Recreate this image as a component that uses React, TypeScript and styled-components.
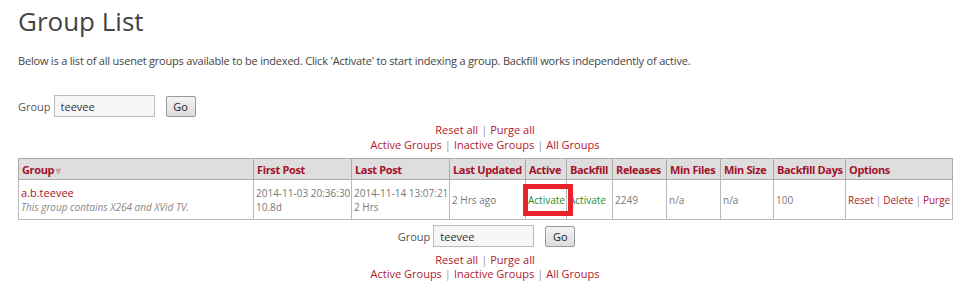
import React from "react";
import styled, { createGlobalStyle } from "styled-components";

const GlobalStyle = createGlobalStyle`
  body {
    margin: 0;
    background: #fff;
    font-family: "Open Sans", "DejaVu Sans", sans-serif;
    font-size: 11px;
    color: #555;
  }
`;

const Page = styled.div`
  padding: 0 18px;
  width: 934px;
`;

const Title = styled.h1`
  margin: 0;
  padding-top: 4px;
  font-size: 26px;
  line-height: 34px;
  font-weight: 400;
  color: #444;
`;

const Intro = styled.p`
  margin: 15px 0 0;
  line-height: 16px;
  letter-spacing: -0.2px;
  color: #444;
`;

const SearchForm = styled.form<{ $center?: boolean }>`
  display: flex;
  align-items: center;
  justify-content: ${(p) => (p.$center ? "center" : "flex-start")};
  margin: ${(p) => (p.$center ? "5px 0 0" : "26px 0 0")};
  ${(p) => (p.$center ? "padding-left: 3px;" : "")}
`;

const Label = styled.label`
  color: #555;
  margin-right: 3px;
`;

const TextInput = styled.input`
  box-sizing: border-box;
  width: 101px;
  height: 22px;
  border: 1px solid #bbb;
  background: #f6f6f6;
  padding: 0 6px;
  font-family: inherit;
  font-size: 11px;
  color: #333;
`;

const GoButton = styled.button`
  box-sizing: border-box;
  width: 30px;
  height: 21px;
  margin-left: 11px;
  border: 1px solid #999;
  border-radius: 2px;
  background: linear-gradient(#f4f4f4, #dcdcdc);
  font-family: inherit;
  font-size: 11px;
  color: #222;
  padding: 0;
`;

const LinkBlock = styled.div<{ $tight?: boolean }>`
  text-align: center;
  line-height: ${(p) => (p.$tight ? "14px" : "15px")};
  margin-top: ${(p) => (p.$tight ? "6px" : "5px")};
`;

const Link = styled.a<{ $tone?: "red" | "green" }>`
  color: ${(p) => (p.$tone === "green" ? "#2a8a2a" : "#b0202e")};
  text-decoration: none;
  cursor: pointer;
`;

const Sep = styled.span<{ $narrow?: boolean }>`
  color: #99a;
  margin: ${(p) => (p.$narrow ? "0 2px" : "0 3px")};
`;

const Table = styled.table`
  width: 934px;
  margin-top: 6px;
  table-layout: fixed;
  border-collapse: collapse;
  border: 1px solid #aaa;
`;

const Col = styled.col<{ $w: number }>`
  width: ${(p) => p.$w}px;
`;

const Th = styled.th`
  background: #dedede;
  border: 1px solid #aaa;
  color: #a3122a;
  font-weight: 700;
  letter-spacing: -0.35px;
  text-align: left;
  padding: 0 3px;
  height: 20px;
  white-space: nowrap;
  overflow: hidden;
`;

const SortArrow = styled.span`
  color: #c9a0a4;
  font-size: 8px;
  margin-left: 1px;
`;

const Td = styled.td`
  border: 1px solid #bbb;
  color: #777;
  font-size: 10px;
  padding: 0 1px 0 2px;
  height: 39px;
  vertical-align: middle;
  white-space: nowrap;
  line-height: 14px;
`;

const ActiveTd = styled(Td)`
  position: relative;
`;

const GroupName = styled.a`
  display: block;
  color: #a3122a;
  font-size: 11px;
  text-decoration: none;
`;

const GroupDesc = styled.div`
  color: #888;
  font-style: italic;
  font-size: 10px;
`;

const Highlight = styled.span`
  position: absolute;
  left: -3px;
  top: 4px;
  width: 50px;
  height: 32px;
  box-sizing: border-box;
  border: 5px solid #e8212b;
  pointer-events: none;
`;

const headers = [
  { label: "Group", w: 235, sort: true },
  { label: "First Post", w: 98 },
  { label: "Last Post", w: 98 },
  { label: "Last Updated", w: 76 },
  { label: "Active", w: 41 },
  { label: "Backfill", w: 46 },
  { label: "Releases", w: 54 },
  { label: "Min Files", w: 54 },
  { label: "Min Size", w: 53 },
  { label: "Backfill Days", w: 72 },
  { label: "Options", w: 107 },
];

const NavLinks = ({ tight }: { tight?: boolean }) => (
  <LinkBlock $tight={tight}>
    <div>
      <Link>Reset all</Link>
      <Sep>|</Sep>
      <Link>Purge all</Link>
    </div>
    <div>
      <Link>Active Groups</Link>
      <Sep>|</Sep>
      <Link>Inactive Groups</Link>
      <Sep>|</Sep>
      <Link>All Groups</Link>
    </div>
  </LinkBlock>
);

const Search = ({ center }: { center?: boolean }) => (
  <SearchForm $center={center} onSubmit={(e) => e.preventDefault()}>
    <Label>Group</Label>
    <TextInput defaultValue="teevee" />
    <GoButton type="submit">Go</GoButton>
  </SearchForm>
);

export default function App() {
  return (
    <>
      <GlobalStyle />
      <Page>
        <Title>Group List</Title>
        <Intro>
          Below is a list of all usenet groups available to be indexed. Click 'Activate' to start
          indexing a group. Backfill works independently of active.
        </Intro>
        <Search />
        <NavLinks />
        <Table>
          <colgroup>
            {headers.map((h) => (
              <Col key={h.label} $w={h.w} />
            ))}
          </colgroup>
          <thead>
            <tr>
              {headers.map((h) => (
                <Th key={h.label}>
                  {h.label}
                  {h.sort && <SortArrow>▼</SortArrow>}
                </Th>
              ))}
            </tr>
          </thead>
          <tbody>
            <tr>
              <Td>
                <GroupName>a.b.teevee</GroupName>
                <GroupDesc>This group contains X264 and XVid TV.</GroupDesc>
              </Td>
              <Td>
                2014-11-03 20:36:30
                <br />
                10.8d
              </Td>
              <Td>
                2014-11-14 13:07:21
                <br />2 Hrs
              </Td>
              <Td>2 Hrs ago</Td>
              <ActiveTd>
                <Link $tone="green">Activate</Link>
                <Highlight />
              </ActiveTd>
              <Td>
                <Link $tone="green">Activate</Link>
              </Td>
              <Td>2249</Td>
              <Td>n/a</Td>
              <Td>n/a</Td>
              <Td>100</Td>
              <Td>
                <Link>Reset</Link>
                <Sep $narrow>|</Sep>
                <Link>Delete</Link>
                <Sep $narrow>|</Sep>
                <Link>Purge</Link>
              </Td>
            </tr>
          </tbody>
        </Table>
        <Search center />
        <NavLinks tight />
      </Page>
    </>
  );
}
